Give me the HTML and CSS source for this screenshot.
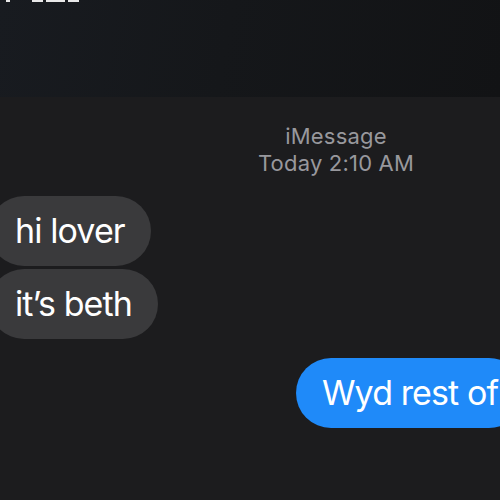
FILE: index.html
```html
<!DOCTYPE html>
<html>
<head>
    <title>iMessage</title>
    <link rel="stylesheet" href="styles.css">
</head>
<body>
    <div class="header">
        <div class="status">
            <span class="tick t1"></span>
            <span class="tick t2"></span>
            <span class="tick t3"></span>
            <span class="tick t4"></span>
        </div>
    </div>

    <div class="thread">
        <div class="meta">
            <div>iMessage</div>
            <div>Today <span class="time">2:10 AM</span></div>
        </div>

        <div class="bubble in">hi lover</div>
        <div class="bubble in">it’s beth</div>

        <div class="bubble out">Wyd rest of</div>
    </div>
</body>
</html>
```

FILE: styles.css
```css
body {
    margin: 0;
    width: 500px;
    height: 500px;
    overflow: hidden;
    background-color: #1c1c1e;
    font-family: Inter, 'Liberation Sans', sans-serif;
    color: #fff;
}

.header {
    height: 97px;
    background: linear-gradient(100deg, #181b20 0%, #15171a 45%, #121315 100%);
}

.status {
    display: flex;
    height: 2px;
}

.tick {
    height: 2px;
    background-color: #e8e8e8;
}

.t1 { width: 4px; margin-left: 6px; }
.t2 { width: 11px; margin-left: 22px; }
.t3 { width: 19px; margin-left: 3px; }
.t4 { width: 11px; margin-left: 3px; }

.thread {
    display: flex;
    flex-direction: column;
    padding-top: 26px;
}

.meta {
    padding-left: 172px;
    text-align: center;
    color: #98989d;
    font-size: 22px;
    line-height: 27px;
    letter-spacing: 0.2px;
    margin-bottom: 19px;
}

.bubble {
    font-size: 34px;
    line-height: 40px;
    letter-spacing: -0.9px;
    padding: 15px 26px;
    border-radius: 35px;
}

.in {
    align-self: flex-start;
    margin-left: -11px;
    margin-bottom: 3px;
    background-color: #3a3a3c;
}

.out {
    align-self: flex-start;
    margin-left: 296px;
    margin-top: 16px;
    white-space: nowrap;
    background-color: #1f8af9;
}
```
